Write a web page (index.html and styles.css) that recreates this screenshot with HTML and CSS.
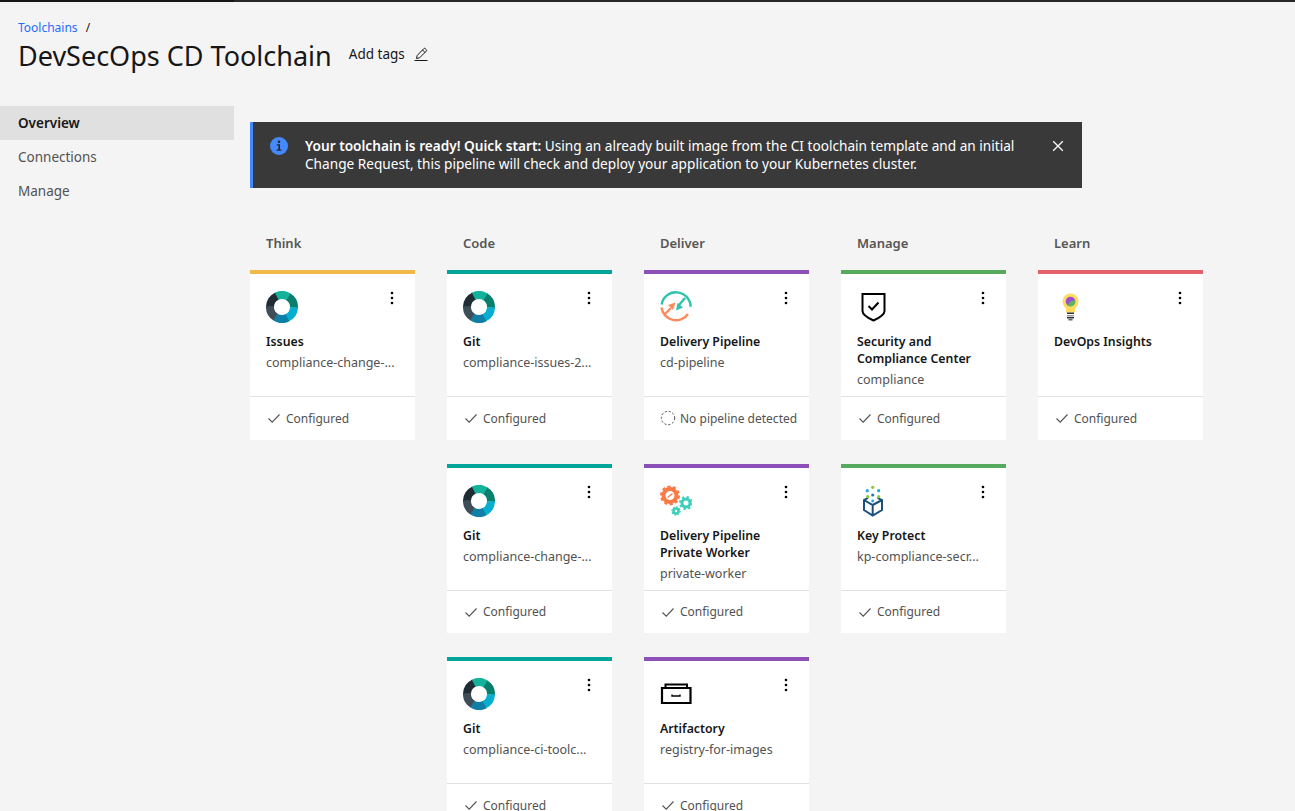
FILE: index.html
```html
<html>
    <head>
        <title>DevSecOps CD Toolchain</title>
        <link rel="stylesheet" href="styles.css">
    </head>
    <body>
        <svg class="defs" width="0" height="0">
            <symbol id="donut" viewBox="0 0 32 32">
                <g fill="none" stroke-width="8">
                    <circle cx="16" cy="16" r="12" pathLength="6" stroke-dasharray="1.03 4.97" stroke="#14b29a" transform="rotate(-118 16 16)"/>
                    <circle cx="16" cy="16" r="12" pathLength="6" stroke-dasharray="1.03 4.97" stroke="#067f6c" transform="rotate(-58 16 16)"/>
                    <circle cx="16" cy="16" r="12" pathLength="6" stroke-dasharray="1.03 4.97" stroke="#07aed0" transform="rotate(2 16 16)"/>
                    <circle cx="16" cy="16" r="12" pathLength="6" stroke-dasharray="1.03 4.97" stroke="#0f7fa8" transform="rotate(62 16 16)"/>
                    <circle cx="16" cy="16" r="12" pathLength="6" stroke-dasharray="1.03 4.97" stroke="#3e4e59" transform="rotate(122 16 16)"/>
                    <circle cx="16" cy="16" r="12" pathLength="6" stroke-dasharray="1.03 4.97" stroke="#1f2c34" transform="rotate(182 16 16)"/>
                </g>
            </symbol>
            <symbol id="kebab" viewBox="0 0 16 16">
                <circle cx="8" cy="3" r="1.3"/><circle cx="8" cy="8" r="1.3"/><circle cx="8" cy="13" r="1.3"/>
            </symbol>
            <symbol id="check" viewBox="0 0 16 16">
                <path d="M2.5 8.5 6.2 12.2 13.5 4.5" fill="none" stroke="#525252" stroke-width="1.1"/>
            </symbol>
        </svg>

        <div class="topbar"><div class="topbar-left"></div></div>

        <div class="header">
            <div class="crumbs"><a class="crumb-link">Toolchains</a><span class="crumb-sep">/</span></div>
            <div class="title-row">
                <h1>DevSecOps CD Toolchain</h1>
                <span class="add-tags">Add tags</span>
                <svg class="pencil" width="16" height="16" viewBox="0 0 16 16" fill="none" stroke="#161616" stroke-width="1">
                    <path d="M1.5 14.5h13"/>
                    <path d="M3.5 12.5 4.2 9.5 10.8 2.6a1 1 0 0 1 1.4 0l1.1 1.1a1 1 0 0 1 0 1.4L6.6 11.8z"/>
                    <path d="M9.5 4 12 6.5"/>
                </svg>
            </div>
        </div>

        <div class="content">
            <div class="sidenav">
                <div class="nav-item active">Overview</div>
                <div class="nav-item">Connections</div>
                <div class="nav-item">Manage</div>
            </div>

            <div class="main">
                <div class="banner">
                    <svg class="banner-icon" width="20" height="20" viewBox="0 0 20 20">
                        <circle cx="10" cy="10" r="9" fill="#4589ff"/>
                        <circle cx="10" cy="5.8" r="1.3" fill="#262626"/>
                        <path d="M7.8 8.3h3.2v5.2h1.4v1.3H7.6v-1.3h1.8V9.6H7.8z" fill="#262626"/>
                    </svg>
                    <p class="banner-text"><b>Your toolchain is ready! Quick start:</b> Using an already built image from the CI toolchain template and an initial<br>Change Request, this pipeline will check and deploy your application to your Kubernetes cluster.</p>
                    <svg class="banner-close" width="16" height="16" viewBox="0 0 16 16" stroke="#fff" stroke-width="1.3">
                        <path d="M3.2 3.2 12.8 12.8M12.8 3.2 3.2 12.8"/>
                    </svg>
                </div>

                <div class="columns">
                    <div class="column think">
                        <div class="column-name">Think</div>
                        <div class="card">
                            <div class="card-body">
                                <div class="card-top"><svg class="logo"><use href="#donut"/></svg><svg class="kebab"><use href="#kebab"/></svg></div>
                                <div class="card-title">Issues</div>
                                <div class="card-sub">compliance-change-...</div>
                            </div>
                            <div class="card-foot"><svg class="foot-icon"><use href="#check"/></svg>Configured</div>
                        </div>
                    </div>

                    <div class="column code">
                        <div class="column-name">Code</div>
                        <div class="card">
                            <div class="card-body">
                                <div class="card-top"><svg class="logo"><use href="#donut"/></svg><svg class="kebab"><use href="#kebab"/></svg></div>
                                <div class="card-title">Git</div>
                                <div class="card-sub">compliance-issues-2...</div>
                            </div>
                            <div class="card-foot"><svg class="foot-icon"><use href="#check"/></svg>Configured</div>
                        </div>
                        <div class="card">
                            <div class="card-body">
                                <div class="card-top"><svg class="logo"><use href="#donut"/></svg><svg class="kebab"><use href="#kebab"/></svg></div>
                                <div class="card-title">Git</div>
                                <div class="card-sub">compliance-change-...</div>
                            </div>
                            <div class="card-foot"><svg class="foot-icon"><use href="#check"/></svg>Configured</div>
                        </div>
                        <div class="card">
                            <div class="card-body">
                                <div class="card-top"><svg class="logo"><use href="#donut"/></svg><svg class="kebab"><use href="#kebab"/></svg></div>
                                <div class="card-title">Git</div>
                                <div class="card-sub">compliance-ci-toolc...</div>
                            </div>
                            <div class="card-foot"><svg class="foot-icon"><use href="#check"/></svg>Configured</div>
                        </div>
                    </div>

                    <div class="column deliver">
                        <div class="column-name">Deliver</div>
                        <div class="card">
                            <div class="card-body">
                                <div class="card-top">
                                    <svg class="logo" viewBox="0 0 32 32" fill="none" stroke-width="2.4">
                                        <path d="M1.6 13.5A14.6 14.6 0 0 1 30.6 15.7" stroke="#2fc2ad"/>
                                        <path d="M1.5 16.5A14.6 14.6 0 0 0 28 23" stroke="#fb8a5c"/>
                                        <path d="M25 7 19 14" stroke="#2fc2ad"/>
                                        <path d="M16 19.5 17.5 12 23 16.5z" fill="#2fc2ad" stroke="none"/>
                                        <path d="M5 23 11 17" stroke="#fb8a5c"/>
                                        <path d="M15.5 11.5 8 14 13 19z" fill="#fb8a5c" stroke="none"/>
                                    </svg>
                                    <svg class="kebab"><use href="#kebab"/></svg>
                                </div>
                                <div class="card-title">Delivery Pipeline</div>
                                <div class="card-sub">cd-pipeline</div>
                            </div>
                            <div class="card-foot no-pipeline">
                                <svg class="pending-icon" width="16" height="16" viewBox="0 0 16 16" fill="none"><circle cx="8" cy="8" r="6.7" stroke="#525252" stroke-dasharray="2.2 1.8"/></svg>No pipeline detected
                            </div>
                        </div>
                        <div class="card">
                            <div class="card-body">
                                <div class="card-top">
                                    <svg class="logo" viewBox="0 0 32 32" fill="none">
                                        <circle cx="10" cy="10.5" r="6.5" stroke="#fb7a45" stroke-width="4"/>
                                        <circle cx="10" cy="10.5" r="8.7" stroke="#fb7a45" stroke-width="2.6" stroke-dasharray="3 2.46"/>
                                        <path d="M7.5 12.5 12.5 8.5" stroke="#fb7a45" stroke-width="1.2"/>
                                        <circle cx="26" cy="18" r="4" stroke="#3ecfbd" stroke-width="3"/>
                                        <circle cx="26" cy="18" r="6" stroke="#3ecfbd" stroke-width="2" stroke-dasharray="2.3 2.4"/>
                                        <circle cx="16" cy="26" r="2.5" stroke="#3ecfbd" stroke-width="2.6"/>
                                        <circle cx="16" cy="26" r="4" stroke="#3ecfbd" stroke-width="1.4" stroke-dasharray="1.6 1.5"/>
                                    </svg>
                                    <svg class="kebab"><use href="#kebab"/></svg>
                                </div>
                                <div class="card-title">Delivery Pipeline Private Worker</div>
                                <div class="card-sub">private-worker</div>
                            </div>
                            <div class="card-foot"><svg class="foot-icon"><use href="#check"/></svg>Configured</div>
                        </div>
                        <div class="card">
                            <div class="card-body">
                                <div class="card-top">
                                    <svg class="logo" viewBox="0 0 32 32" fill="none" stroke="#000" stroke-width="2">
                                        <path d="M5.5 10V6.5H27V10"/>
                                        <path d="M2 10H30.5V25H2z" stroke-width="2.2"/>
                                        <path d="M12 16.5V18H20V16.5" stroke-width="1.4"/>
                                    </svg>
                                    <svg class="kebab"><use href="#kebab"/></svg>
                                </div>
                                <div class="card-title">Artifactory</div>
                                <div class="card-sub">registry-for-images</div>
                            </div>
                            <div class="card-foot"><svg class="foot-icon"><use href="#check"/></svg>Configured</div>
                        </div>
                    </div>

                    <div class="column manage">
                        <div class="column-name">Manage</div>
                        <div class="card">
                            <div class="card-body">
                                <div class="card-top">
                                    <svg class="logo" viewBox="0 0 32 32" fill="none" stroke="#000" stroke-width="2">
                                        <path d="M5.5 3H27.5V20C27.5 24 22 27 16.5 29.5 11 27 5.5 24 5.5 20z"/>
                                        <path d="M11.5 15 15 18.5 21.5 11.5"/>
                                    </svg>
                                    <svg class="kebab"><use href="#kebab"/></svg>
                                </div>
                                <div class="card-title">Security and Compliance Center</div>
                                <div class="card-sub">compliance</div>
                            </div>
                            <div class="card-foot"><svg class="foot-icon"><use href="#check"/></svg>Configured</div>
                        </div>
                        <div class="card">
                            <div class="card-body">
                                <div class="card-top">
                                    <svg class="logo" viewBox="0 0 32 32" fill="none">
                                        <path d="M11 12.8 7 15V25L15.7 30.5 25 25V15L20.5 12.8 M7 15 15.7 20 25 15 M15.7 20V30.5" stroke="#1c4f7c" stroke-width="2"/>
                                        <circle cx="15.7" cy="2.3" r="1.6" fill="#8cc63f"/>
                                        <circle cx="10.3" cy="5.7" r="1.6" fill="#20a8d8"/>
                                        <circle cx="21.7" cy="5.7" r="1.6" fill="#20a8d8"/>
                                        <circle cx="15.7" cy="10" r="1.6" fill="#1c7fb0"/>
                                        <circle cx="10.7" cy="11.7" r="1.6" fill="#8cc63f"/>
                                        <circle cx="21.7" cy="11.7" r="1.6" fill="#8cc63f"/>
                                        <circle cx="15.7" cy="16" r="1.4" fill="#20a8d8"/>
                                    </svg>
                                    <svg class="kebab"><use href="#kebab"/></svg>
                                </div>
                                <div class="card-title">Key Protect</div>
                                <div class="card-sub">kp-compliance-secr...</div>
                            </div>
                            <div class="card-foot"><svg class="foot-icon"><use href="#check"/></svg>Configured</div>
                        </div>
                    </div>

                    <div class="column learn">
                        <div class="column-name">Learn</div>
                        <div class="card">
                            <div class="card-body">
                                <div class="card-top">
                                    <svg class="logo" viewBox="0 0 32 32">
                                        <circle cx="16.5" cy="10.5" r="8" fill="#ffdc5c"/>
                                        <path d="M12 16H21V21.5H12z" fill="#ffdc5c"/>
                                        <circle cx="16.5" cy="10.5" r="4.8" fill="#9a4fd0"/>
                                        <path d="M16.5 10.5 21.1 9.3A4.8 4.8 0 0 1 13.5 14.3z" fill="#5cb85c"/>
                                        <path d="M13 21.5H20V23H13z" fill="#333"/>
                                        <path d="M13 24H20V25.5H13z" fill="#999"/>
                                        <path d="M13 26H20V27.5H13z" fill="#333"/>
                                        <path d="M14.5 28H18.5V29.5H14.5z" fill="#666"/>
                                    </svg>
                                    <svg class="kebab"><use href="#kebab"/></svg>
                                </div>
                                <div class="card-title">DevOps Insights</div>
                            </div>
                            <div class="card-foot"><svg class="foot-icon"><use href="#check"/></svg>Configured</div>
                        </div>
                    </div>
                </div>
            </div>
        </div>
    </body>
</html>
```

FILE: styles.css
```css
html, body {
    margin: 0;
    padding: 0;
    height: 100%;
    overflow: hidden;
}
body {
    background-color: #f4f4f4;
    color: #161616;
    font-family: "Noto Sans", sans-serif;
}
.defs {
    display: block;
    height: 0;
}
.topbar {
    height: 2px;
    background-color: #282828;
}
.topbar-left {
    width: 234px;
    height: 2px;
    background-color: #161616;
}

.header {
    height: 104px;
    padding: 17px 0 0 18px;
    box-sizing: border-box;
}
.crumbs {
    display: flex;
    align-items: center;
    height: 16px;
    font-size: 12px;
}
.crumb-link {
    color: #1f6cff;
}
.crumb-sep {
    margin-left: 8px;
}
.title-row {
    display: flex;
    align-items: center;
    height: 40px;
}
h1 {
    margin: 0;
    font-size: 27px;
    font-weight: 400;
}
.add-tags {
    margin: 0 0 3px 17px;
    font-size: 13.5px;
}
.pencil {
    margin: 0 0 3px 8px;
}

.content {
    display: flex;
}
.sidenav {
    flex: 0 0 234px;
}
.nav-item {
    height: 34px;
    line-height: 34px;
    padding-left: 18px;
    font-size: 13.5px;
    color: #525252;
}
.nav-item.active {
    background-color: #e0e0e0;
    color: #161616;
    font-weight: 600;
}

.main {
    flex: 1;
    padding: 16px 0 0 16px;
}
.banner {
    display: flex;
    width: 832px;
    height: 66px;
    box-sizing: border-box;
    border-left: 3px solid #4589ff;
    background-color: #393939;
    color: #fff;
}
.banner-icon {
    margin: 14px 0 0 16px;
    flex: none;
}
.banner-text {
    margin: 15px 0 0 16px;
    flex: 1;
    font-size: 13.65px;
    line-height: 18px;
    white-space: nowrap;
}
.banner-text b {
    font-weight: 600;
}
.banner-close {
    margin: 16px 16px 0 0;
    flex: none;
}

.columns {
    display: flex;
    gap: 32px;
    margin-top: 44px;
}
.column {
    width: 165px;
    display: flex;
    flex-direction: column;
    gap: 24px;
}
.column-name {
    height: 20px;
    line-height: 22px;
    margin-bottom: -6px;
    padding-left: 16px;
    font-size: 13px;
    font-weight: 600;
    color: #565656;
}
.card {
    height: 169.5px;
    box-sizing: border-box;
    border-top: 4px solid #000;
    background-color: #fff;
    display: flex;
    flex-direction: column;
}
.think .card { border-top-color: #f1b84b; }
.code .card { border-top-color: #00a59a; }
.deliver .card { border-top-color: #8c50b8; }
.manage .card { border-top-color: #56aa5e; }
.learn .card { border-top-color: #e3626a; }

.card-body {
    height: 123px;
    flex: none;
    box-sizing: border-box;
    padding: 17px 15px 0 16px;
    border-bottom: 1px solid #e0e0e0;
}
.card-top {
    display: flex;
    justify-content: space-between;
    height: 32px;
}
.logo {
    width: 32px;
    height: 32px;
}
.kebab {
    width: 16px;
    height: 16px;
    margin-top: -1px;
}
.card-title {
    margin-top: 10px;
    font-size: 12.3px;
    line-height: 17px;
    font-weight: 600;
    color: #161616;
}
.card-sub {
    margin-top: 4px;
    font-size: 12.5px;
    line-height: 17px;
    color: #525252;
    white-space: nowrap;
}
.card-foot {
    flex: 1;
    display: flex;
    align-items: center;
    gap: 4px;
    padding-left: 16px;
    font-size: 12px;
    color: #525252;
}
.foot-icon {
    width: 16px;
    height: 16px;
}
.pending-icon {
    flex: none;
}
.no-pipeline {
    white-space: nowrap;
}
```
